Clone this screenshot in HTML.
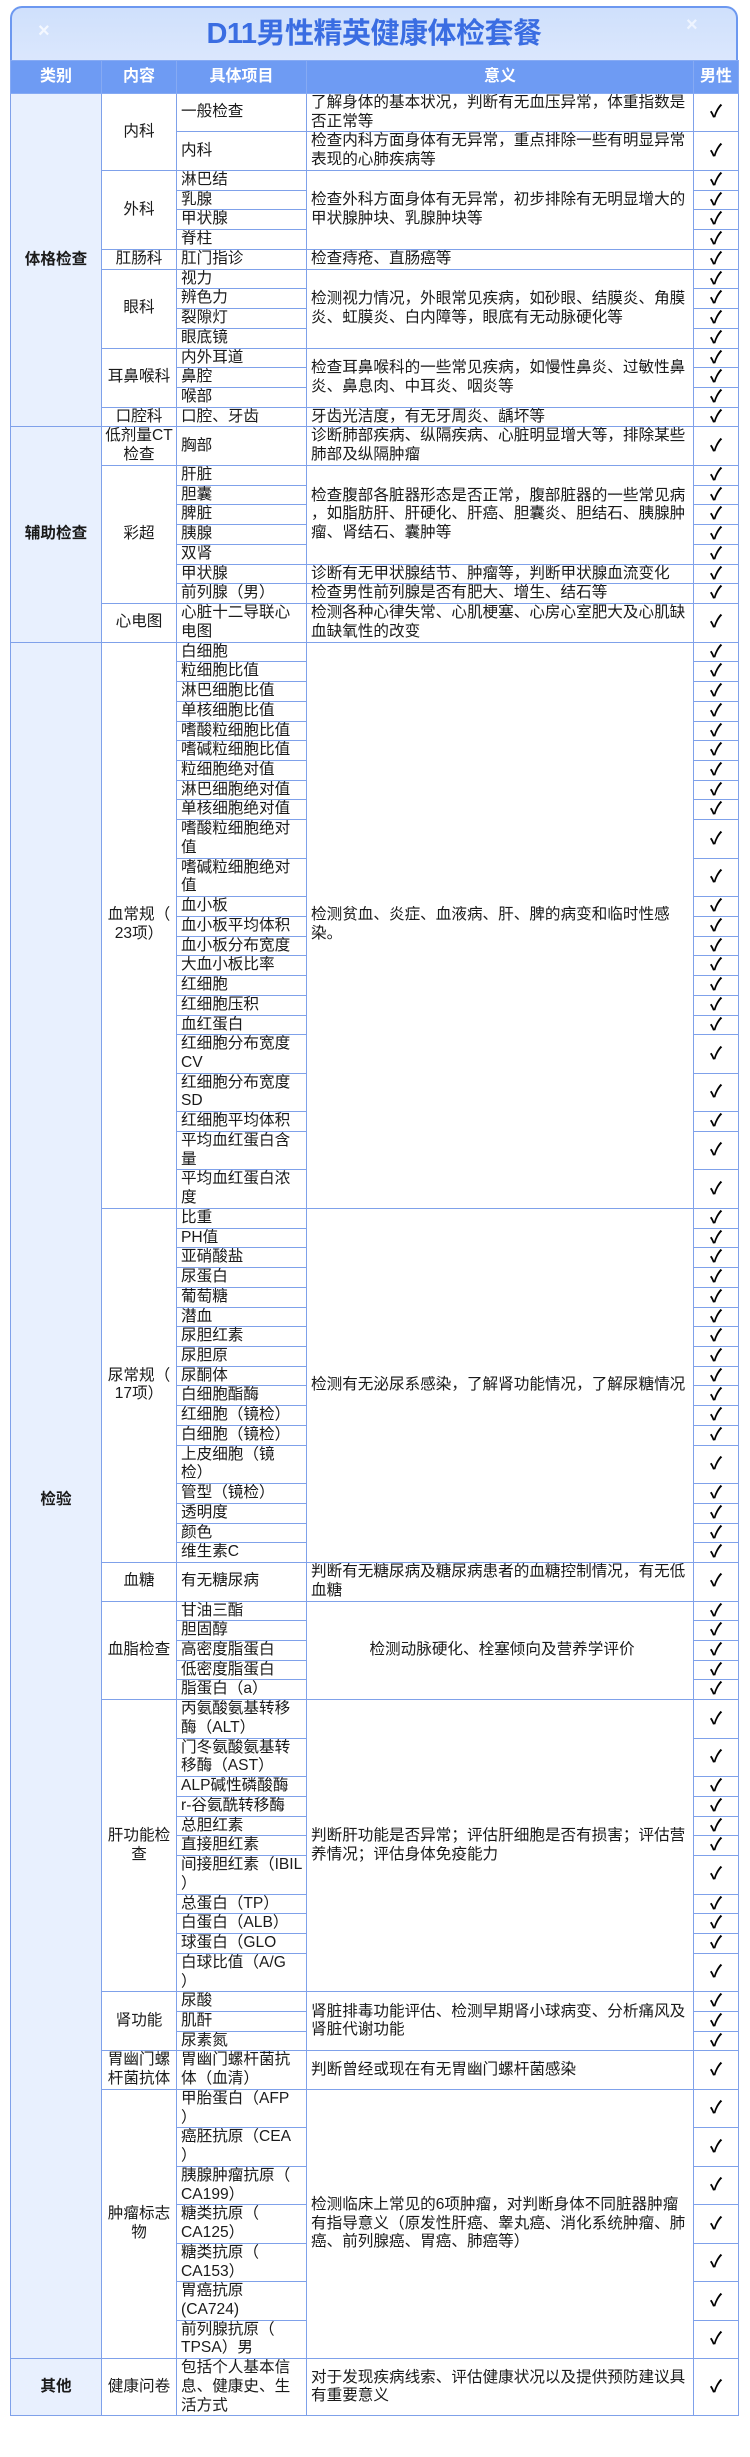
<!DOCTYPE html>
<html><head><meta charset="utf-8">
<style>
*{margin:0;padding:0;box-sizing:border-box}
body{width:750px;height:2457px;background:#fff;font-family:"Liberation Sans","Noto Sans CJK SC",sans-serif;color:#1a1a1a;position:relative;overflow:hidden}
.band{position:absolute;left:10px;top:6px;width:728px;height:55px;background:linear-gradient(#cfe0fc,#dbe7fd);border:2px solid #6c98f0;border-bottom:none;border-radius:12px 12px 0 0}
.title{position:absolute;left:0;right:0;top:8px;text-align:center;font-size:29px;font-weight:bold;color:#3a6de2;line-height:36px;letter-spacing:-0.5px}
.x1{position:absolute;left:38px;top:20px;color:#f4f8ff;font-size:20px;font-weight:bold}
.x2{position:absolute;left:686px;top:14px;color:#eef4ff;font-size:20px;font-weight:bold}
table{position:absolute;left:10px;top:60px;width:728px;border-collapse:collapse;table-layout:fixed;font-size:15.6px}
td,th{border:1px solid #7fa1ea;line-height:18.73px;padding:0;white-space:nowrap;overflow:hidden;vertical-align:middle}
th{background:#6e9bf3;color:#fff;font-weight:bold;height:33px;font-size:16px;border-color:#86aaf3}
td.c1{background:#e8f0fe;text-align:center;font-weight:bold}
td.c2{text-align:center}
td.c3{padding-left:4px}
td.c4{padding-left:4px}
td.c5{text-align:center;font-size:17px;font-weight:bold;color:#000}
</style></head><body>
<div class="band"><div class="title">D11男性精英健康体检套餐</div></div>
<div class="x1">×</div><div class="x2">×</div>
<table>
<colgroup><col style="width:91px"><col style="width:75px"><col style="width:130px"><col style="width:387px"><col style="width:45px"></colgroup>
<tr><th>类别</th><th>内容</th><th>具体项目</th><th>意义</th><th>男性</th></tr>
<tr><td class="c1" rowspan="15">体格检查</td><td class="c2" rowspan="2">内科</td><td class="c3">一般检查</td><td class="c4">了解身体的基本状况，判断有无血压异常，体重指数是<br>否正常等</td><td class="c5">✓</td></tr>
<tr><td class="c3">内科</td><td class="c4">检查内科方面身体有无异常，重点排除一些有明显异常<br>表现的心肺疾病等</td><td class="c5">✓</td></tr>
<tr><td class="c2" rowspan="4">外科</td><td class="c3">淋巴结</td><td class="c4" rowspan="4">检查外科方面身体有无异常，初步排除有无明显增大的<br>甲状腺肿块、乳腺肿块等</td><td class="c5">✓</td></tr>
<tr><td class="c3">乳腺</td><td class="c5">✓</td></tr>
<tr><td class="c3">甲状腺</td><td class="c5">✓</td></tr>
<tr><td class="c3">脊柱</td><td class="c5">✓</td></tr>
<tr><td class="c2">肛肠科</td><td class="c3">肛门指诊</td><td class="c4">检查痔疮、直肠癌等</td><td class="c5">✓</td></tr>
<tr><td class="c2" rowspan="4">眼科</td><td class="c3">视力</td><td class="c4" rowspan="4">检测视力情况，外眼常见疾病，如砂眼、结膜炎、角膜<br>炎、虹膜炎、白内障等，眼底有无动脉硬化等</td><td class="c5">✓</td></tr>
<tr><td class="c3">辨色力</td><td class="c5">✓</td></tr>
<tr><td class="c3">裂隙灯</td><td class="c5">✓</td></tr>
<tr><td class="c3">眼底镜</td><td class="c5">✓</td></tr>
<tr><td class="c2" rowspan="3">耳鼻喉科</td><td class="c3">内外耳道</td><td class="c4" rowspan="3">检查耳鼻喉科的一些常见疾病，如慢性鼻炎、过敏性鼻<br>炎、鼻息肉、中耳炎、咽炎等</td><td class="c5">✓</td></tr>
<tr><td class="c3">鼻腔</td><td class="c5">✓</td></tr>
<tr><td class="c3">喉部</td><td class="c5">✓</td></tr>
<tr><td class="c2">口腔科</td><td class="c3">口腔、牙齿</td><td class="c4">牙齿光洁度，有无牙周炎、龋坏等</td><td class="c5">✓</td></tr>
<tr><td class="c1" rowspan="9">辅助检查</td><td class="c2">低剂量CT<br>检查</td><td class="c3">胸部</td><td class="c4">诊断肺部疾病、纵隔疾病、心脏明显增大等，排除某些<br>肺部及纵隔肿瘤</td><td class="c5">✓</td></tr>
<tr><td class="c2" rowspan="7">彩超</td><td class="c3">肝脏</td><td class="c4" rowspan="5">检查腹部各脏器形态是否正常，腹部脏器的一些常见病<br>，如脂肪肝、肝硬化、肝癌、胆囊炎、胆结石、胰腺肿<br>瘤、肾结石、囊肿等</td><td class="c5">✓</td></tr>
<tr><td class="c3">胆囊</td><td class="c5">✓</td></tr>
<tr><td class="c3">脾脏</td><td class="c5">✓</td></tr>
<tr><td class="c3">胰腺</td><td class="c5">✓</td></tr>
<tr><td class="c3">双肾</td><td class="c5">✓</td></tr>
<tr><td class="c3">甲状腺</td><td class="c4">诊断有无甲状腺结节、肿瘤等，判断甲状腺血流变化</td><td class="c5">✓</td></tr>
<tr><td class="c3">前列腺（男）</td><td class="c4">检查男性前列腺是否有肥大、增生、结石等</td><td class="c5">✓</td></tr>
<tr><td class="c2">心电图</td><td class="c3">心脏十二导联心<br>电图</td><td class="c4">检测各种心律失常、心肌梗塞、心房心室肥大及心肌缺<br>血缺氧性的改变</td><td class="c5">✓</td></tr>
<tr><td class="c1" rowspan="68">检验</td><td class="c2" rowspan="23">血常规（<br>23项）</td><td class="c3">白细胞</td><td class="c4" rowspan="23">检测贫血、炎症、血液病、肝、脾的病变和临时性感<br>染。</td><td class="c5">✓</td></tr>
<tr><td class="c3">粒细胞比值</td><td class="c5">✓</td></tr>
<tr><td class="c3">淋巴细胞比值</td><td class="c5">✓</td></tr>
<tr><td class="c3">单核细胞比值</td><td class="c5">✓</td></tr>
<tr><td class="c3">嗜酸粒细胞比值</td><td class="c5">✓</td></tr>
<tr><td class="c3">嗜碱粒细胞比值</td><td class="c5">✓</td></tr>
<tr><td class="c3">粒细胞绝对值</td><td class="c5">✓</td></tr>
<tr><td class="c3">淋巴细胞绝对值</td><td class="c5">✓</td></tr>
<tr><td class="c3">单核细胞绝对值</td><td class="c5">✓</td></tr>
<tr><td class="c3">嗜酸粒细胞绝对<br>值</td><td class="c5">✓</td></tr>
<tr><td class="c3">嗜碱粒细胞绝对<br>值</td><td class="c5">✓</td></tr>
<tr><td class="c3">血小板</td><td class="c5">✓</td></tr>
<tr><td class="c3">血小板平均体积</td><td class="c5">✓</td></tr>
<tr><td class="c3">血小板分布宽度</td><td class="c5">✓</td></tr>
<tr><td class="c3">大血小板比率</td><td class="c5">✓</td></tr>
<tr><td class="c3">红细胞</td><td class="c5">✓</td></tr>
<tr><td class="c3">红细胞压积</td><td class="c5">✓</td></tr>
<tr><td class="c3">血红蛋白</td><td class="c5">✓</td></tr>
<tr><td class="c3">红细胞分布宽度<br>CV</td><td class="c5">✓</td></tr>
<tr><td class="c3">红细胞分布宽度<br>SD</td><td class="c5">✓</td></tr>
<tr><td class="c3">红细胞平均体积</td><td class="c5">✓</td></tr>
<tr><td class="c3">平均血红蛋白含<br>量</td><td class="c5">✓</td></tr>
<tr><td class="c3">平均血红蛋白浓<br>度</td><td class="c5">✓</td></tr>
<tr><td class="c2" rowspan="17">尿常规（<br>17项）</td><td class="c3">比重</td><td class="c4" rowspan="17">检测有无泌尿系感染，了解肾功能情况，了解尿糖情况</td><td class="c5">✓</td></tr>
<tr><td class="c3">PH值</td><td class="c5">✓</td></tr>
<tr><td class="c3">亚硝酸盐</td><td class="c5">✓</td></tr>
<tr><td class="c3">尿蛋白</td><td class="c5">✓</td></tr>
<tr><td class="c3">葡萄糖</td><td class="c5">✓</td></tr>
<tr><td class="c3">潜血</td><td class="c5">✓</td></tr>
<tr><td class="c3">尿胆红素</td><td class="c5">✓</td></tr>
<tr><td class="c3">尿胆原</td><td class="c5">✓</td></tr>
<tr><td class="c3">尿酮体</td><td class="c5">✓</td></tr>
<tr><td class="c3">白细胞酯酶</td><td class="c5">✓</td></tr>
<tr><td class="c3">红细胞（镜检）</td><td class="c5">✓</td></tr>
<tr><td class="c3">白细胞（镜检）</td><td class="c5">✓</td></tr>
<tr><td class="c3">上皮细胞（镜<br>检）</td><td class="c5">✓</td></tr>
<tr><td class="c3">管型（镜检）</td><td class="c5">✓</td></tr>
<tr><td class="c3">透明度</td><td class="c5">✓</td></tr>
<tr><td class="c3">颜色</td><td class="c5">✓</td></tr>
<tr><td class="c3">维生素C</td><td class="c5">✓</td></tr>
<tr><td class="c2">血糖</td><td class="c3">有无糖尿病</td><td class="c4">判断有无糖尿病及糖尿病患者的血糖控制情况，有无低<br>血糖</td><td class="c5">✓</td></tr>
<tr><td class="c2" rowspan="5">血脂检查</td><td class="c3">甘油三酯</td><td class="c4" rowspan="5" style="text-align:center">检测动脉硬化、栓塞倾向及营养学评价</td><td class="c5">✓</td></tr>
<tr><td class="c3">胆固醇</td><td class="c5">✓</td></tr>
<tr><td class="c3">高密度脂蛋白</td><td class="c5">✓</td></tr>
<tr><td class="c3">低密度脂蛋白</td><td class="c5">✓</td></tr>
<tr><td class="c3">脂蛋白（a）</td><td class="c5">✓</td></tr>
<tr><td class="c2" rowspan="11">肝功能检<br>查</td><td class="c3">丙氨酸氨基转移<br>酶（ALT）</td><td class="c4" rowspan="11">判断肝功能是否异常；评估肝细胞是否有损害；评估营<br>养情况；评估身体免疫能力</td><td class="c5">✓</td></tr>
<tr><td class="c3">门冬氨酸氨基转<br>移酶（AST）</td><td class="c5">✓</td></tr>
<tr><td class="c3">ALP碱性磷酸酶</td><td class="c5">✓</td></tr>
<tr><td class="c3">r-谷氨酰转移酶</td><td class="c5">✓</td></tr>
<tr><td class="c3">总胆红素</td><td class="c5">✓</td></tr>
<tr><td class="c3">直接胆红素</td><td class="c5">✓</td></tr>
<tr><td class="c3">间接胆红素（IBIL<br>）</td><td class="c5">✓</td></tr>
<tr><td class="c3">总蛋白（TP）</td><td class="c5">✓</td></tr>
<tr><td class="c3">白蛋白（ALB）</td><td class="c5">✓</td></tr>
<tr><td class="c3">球蛋白（GLO</td><td class="c5">✓</td></tr>
<tr><td class="c3">白球比值（A/G<br>）</td><td class="c5">✓</td></tr>
<tr><td class="c2" rowspan="3">肾功能</td><td class="c3">尿酸</td><td class="c4" rowspan="3">肾脏排毒功能评估、检测早期肾小球病变、分析痛风及<br>肾脏代谢功能</td><td class="c5">✓</td></tr>
<tr><td class="c3">肌酐</td><td class="c5">✓</td></tr>
<tr><td class="c3">尿素氮</td><td class="c5">✓</td></tr>
<tr><td class="c2">胃幽门螺<br>杆菌抗体</td><td class="c3">胃幽门螺杆菌抗<br>体（血清）</td><td class="c4">判断曾经或现在有无胃幽门螺杆菌感染</td><td class="c5">✓</td></tr>
<tr><td class="c2" rowspan="7">肿瘤标志<br>物</td><td class="c3">甲胎蛋白（AFP<br>）</td><td class="c4" rowspan="7">检测临床上常见的6项肿瘤，对判断身体不同脏器肿瘤<br>有指导意义（原发性肝癌、睾丸癌、消化系统肿瘤、肺<br>癌、前列腺癌、胃癌、肺癌等）</td><td class="c5">✓</td></tr>
<tr><td class="c3">癌胚抗原（CEA<br>）</td><td class="c5">✓</td></tr>
<tr><td class="c3">胰腺肿瘤抗原（<br>CA199）</td><td class="c5">✓</td></tr>
<tr><td class="c3">糖类抗原（<br>CA125）</td><td class="c5">✓</td></tr>
<tr><td class="c3">糖类抗原（<br>CA153）</td><td class="c5">✓</td></tr>
<tr><td class="c3">胃癌抗原<br>(CA724)</td><td class="c5">✓</td></tr>
<tr><td class="c3">前列腺抗原（<br>TPSA）男</td><td class="c5">✓</td></tr>
<tr><td class="c1">其他</td><td class="c2">健康问卷</td><td class="c3">包括个人基本信<br>息、健康史、生<br>活方式</td><td class="c4">对于发现疾病线索、评估健康状况以及提供预防建议具<br>有重要意义</td><td class="c5">✓</td></tr>
</table>
</body></html>
